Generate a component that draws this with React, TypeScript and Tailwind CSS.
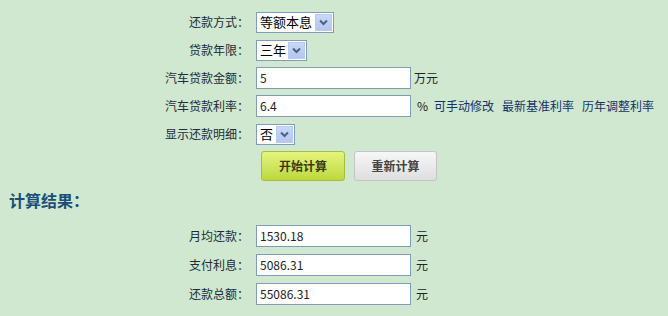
import React from "react"

const font = { fontFamily: '"Noto Sans CJK SC", "Liberation Sans", sans-serif' }

function Arrow() {
  return (
    <span className="flex h-[17px] w-[17px] items-center justify-center bg-gradient-to-b from-[#c9d8f8] to-[#b2c6f0] border border-[#b9c9ef]">
      <svg width="9" height="7" viewBox="0 0 9 7">
        <path d="M1 1.5 L4.5 5 L8 1.5" fill="none" stroke="#4d6185" strokeWidth="2" />
      </svg>
    </span>
  )
}

function Select({ value, w }: { value: string; w: string }) {
  return (
    <div className={`flex h-[21px] ${w} items-center justify-between border border-[#7f9db9] bg-white pl-[3px] pr-[1px] text-[13px] text-black`}>
      <span>{value}</span>
      <Arrow />
    </div>
  )
}

function Field({ value }: { value: string }) {
  return (
    <div className="flex h-[22px] w-[155px] items-center border border-[#7f9db9] bg-white px-[3px] text-[12px] text-[#222]">
      {value}
    </div>
  )
}

function Row({ label, children }: { label: string; children: React.ReactNode }) {
  return (
    <div className="flex h-[28px] items-center">
      <div className="w-[256px] pr-[7px] text-right text-[12px] text-[#1d2b3a]">{label}：</div>
      <div className="flex items-center">{children}</div>
    </div>
  )
}

function Result({ label, value }: { label: string; value: string }) {
  return (
    <div className="flex h-[29px] items-center">
      <div className="w-[256px] pr-[7px] text-right text-[12px] text-[#1d2b3a]">{label}：</div>
      <Field value={value} />
      <span className="ml-[5px] text-[12px] text-[#222]">元</span>
    </div>
  )
}

export default function App() {
  return (
    <div className="h-[316px] w-[668px] overflow-hidden bg-[#cfe8cf]" style={font}>
      <div className="pt-[8px]">
        <Row label="还款方式">
          <Select value="等额本息" w="w-[78px]" />
        </Row>
        <Row label="贷款年限">
          <Select value="三年" w="w-[51px]" />
        </Row>
        <Row label="汽车贷款金额">
          <Field value="5" />
          <span className="ml-[3px] text-[12px] text-[#222]">万元</span>
        </Row>
        <Row label="汽车贷款利率">
          <Field value="6.4" />
          <span className="ml-[6px] text-[12px] text-[#222]">%</span>
          <span className="ml-[6px] flex gap-[8px] text-[12px] text-[#16306a]">
            <span>可手动修改</span>
            <span>最新基准利率</span>
            <span>历年调整利率</span>
          </span>
        </Row>
        <Row label="显示还款明细">
          <Select value="否" w="w-[39px]" />
        </Row>
        <div className="flex gap-[9px] pl-[261px] pt-[3px]">
          <div className="flex h-[30px] w-[84px] items-center justify-center rounded-[3px] border border-[#a4c03a] bg-gradient-to-b from-[#e6f47c] to-[#bcd83c] text-[12px] font-bold text-[#3a3a10]">
            开始计算
          </div>
          <div className="flex h-[30px] w-[83px] items-center justify-center rounded-[3px] border border-[#c5c5c5] bg-gradient-to-b from-[#f7f7f7] to-[#dedede] text-[12px] font-bold text-[#444]">
            重新计算
          </div>
        </div>
        <div className="pl-[9px] pt-[7px] text-[16px] font-bold text-[#1b4e78]">计算结果：</div>
        <div className="pt-[9px]">
          <Result label="月均还款" value="1530.18" />
          <Result label="支付利息" value="5086.31" />
          <Result label="还款总额" value="55086.31" />
        </div>
      </div>
    </div>
  )
}
